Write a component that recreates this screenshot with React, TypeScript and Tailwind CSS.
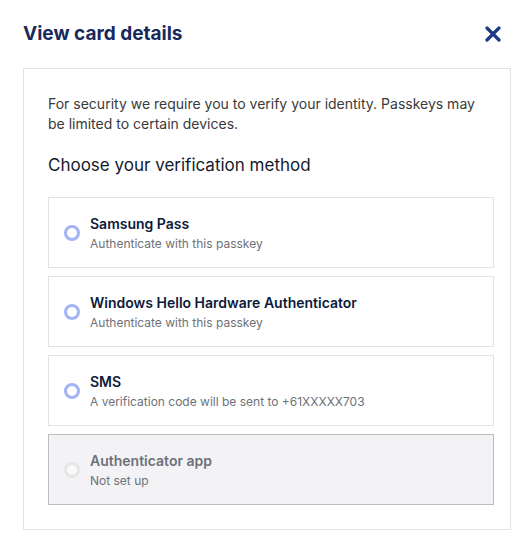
const methods = [
  { title: 'Samsung Pass', sub: 'Authenticate with this passkey' },
  { title: 'Windows Hello Hardware Authenticator', sub: 'Authenticate with this passkey' },
  { title: 'SMS', sub: 'A verification code will be sent to +61XXXXX703' },
  { title: 'Authenticator app', sub: 'Not set up', disabled: true },
];

function Option({ title, sub, disabled }: { title: string; sub: string; disabled?: boolean }) {
  return (
    <label
      className={
        disabled
          ? 'flex items-center gap-[10px] h-[71px] pl-[15px] border border-[#bdbdbd] bg-[#f3f3f5]'
          : 'flex items-center gap-[10px] h-[71px] pl-[15px] border border-[#e3e3e3] bg-white cursor-pointer'
      }
    >
      <span
        className={
          disabled
            ? 'w-4 h-4 rounded-full border-[3px] border-[#e6e6e6] bg-[#fafafa] shrink-0'
            : 'w-4 h-4 rounded-full border-[3px] border-[#a2b4f3] bg-white shrink-0'
        }
      />
      <span className="flex flex-col pt-[2px]">
        <span className={disabled ? 'text-[14px] leading-5 font-semibold text-[#6e717a]' : 'text-[14px] leading-5 font-semibold text-[#0d1a3a]'}>
          {title}
        </span>
        <span className="text-[12px] leading-5 text-[#6e717a]">{sub}</span>
      </span>
    </label>
  );
}

export default function App() {
  return (
    <div className="w-[531px] h-[551px] bg-white font-['Inter',sans-serif]">
      <div className="flex items-center justify-between pl-[23px] pr-[30px] pt-[21px] h-[68px] pb-[21px]">
        <h2 className="text-[19px] font-bold text-[#172a5a]">View card details</h2>
        <button className="text-[#1c3b84]">
          <svg width="16" height="16" viewBox="0 0 16 16">
            <path d="M2 2 L14 14 M14 2 L2 14" stroke="currentColor" strokeWidth="3.2" strokeLinecap="round" />
          </svg>
        </button>
      </div>
      <div className="ml-[23px] w-[488px] border border-[#e2e2e2] pl-[24px] pr-[16px] pt-[25px] pb-[24px]">
        <p className="text-[14px] leading-5 text-[#3a3a3a] pr-[12px]">
          For security we require you to verify your identity. Passkeys may be limited to certain devices.
        </p>
        <h3 className="mt-[19px] text-[17px] leading-6 text-[#141a2b]">Choose your verification method</h3>
        <div className="mt-[20px] flex flex-col gap-[8px]">
          {methods.map((m) => (
            <Option key={m.title} {...m} />
          ))}
        </div>
      </div>
    </div>
  );
}
